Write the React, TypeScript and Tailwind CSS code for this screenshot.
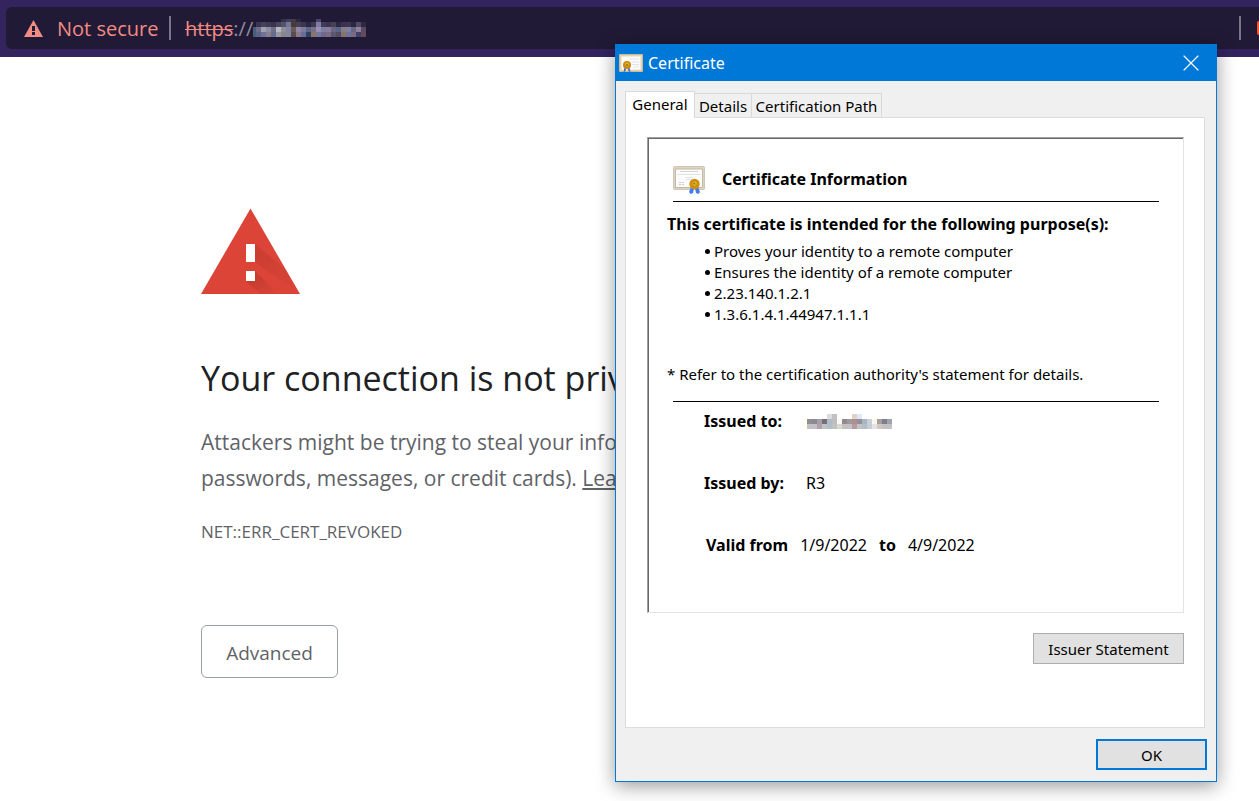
import { X } from 'lucide-react'

const CELL = 5

const hostRows = [
  ['', '', '', '', '', '', '#35334c', '#3f3f5c', '#453a40', '#2c2840', '', '', '', '#48446a', '', '', '', '', '', '', '', '', ''],
  ['', '#3a3650', '#454158', '#3f3b52', '#383450', '#4a465c', '#565268', '#72789a', '#483a38', '#454058', '#3a3650', '#2b2742', '#3c3852', '#8478a6', '#3f3b58', '#3a3650', '#454158', '#2c2842', '#38344e', '#3a3650', '#2b2742', '#504a66', '#30283c'],
  ['#44607c', '#6d6c8c', '#a0a0ae', '#8c8ca6', '#716d86', '#b4b8c6', '#908e96', '#8284a2', '#6a5a5c', '#9088a2', '#7c7a9a', '#5a6488', '#7c7088', '#988eb6', '#7c80a0', '#867c9c', '#6a6680', '#5a6488', '#8c7c80', '#7a80a6', '#6a6680', '#8c80a0', '#5c4a64'],
  ['#44607c', '#5e6288', '#6e7298', '#8a7e8a', '#686c92', '#9a98a4', '#8a8688', '#8088a0', '#5c4c50', '#8a7a88', '#6a6e94', '#304066', '#8c7468', '#727a9c', '#70688c', '#7c6a80', '#5c566e', '#524c64', '#86746c', '#6c7298', '#7a6c80', '#404070', '#644a58'],
]

const issuedToRows = [
  ['', '', '', '', '', '#dadde0', '#c2c2c4', '', '', '', '#e4d2c8', '#dbe9f8', '', '', '', '', '', ''],
  ['#fffff0', '#948c90', '#8c8a90', '#a2a0aa', '#786e78', '#b0bcc4', '#bebec0', '#f8f8f4', '#948888', '#9c9a9e', '#b08e8c', '#948f98', '#aab4c0', '#c8d0da', '#fbf6ea', '#a4a09c', '#7c7e8e', '#a0a2ae'],
  ['#fffff4', '#c2c2c4', '#c2c2c4', '#b0a2a8', '#c2c2c4', '#b2bec6', '#c2c2c4', '#d8dacc', '#c2c2c4', '#c2c2c4', '#b49c9c', '#c2c2c4', '#b2bec8', '#c8ced8', '#e2e4e8', '#d4c8bc', '#c2c2c4', '#c2c2c4'],
]

const purposes = [
  'Proves your identity to a remote computer',
  'Ensures the identity of a remote computer',
  '2.23.140.1.2.1',
  '1.3.6.1.4.1.44947.1.1.1',
]

// cropX and cropY trim the outer cells on the left and the top
function Mosaic({ rows, label, cropX = 0, cropY = 0 }: { rows: string[][]; label: string; cropX?: number; cropY?: number }) {
  const width = rows[0].length * CELL - cropX
  const height = rows.length * CELL - cropY
  return (
    <svg
      width={width}
      height={height}
      viewBox={`${cropX} ${cropY} ${width} ${height}`}
      role="img"
      aria-label={label}
      shapeRendering="crispEdges"
    >
      {rows.map((row, y) =>
        row.map((fill, x) =>
          fill ? (
            <rect key={`${x}-${y}`} x={x * CELL} y={y * CELL} width={CELL} height={CELL} fill={fill} />
          ) : null
        )
      )}
    </svg>
  )
}

function WarningTriangle() {
  return (
    <svg width="99" height="86" viewBox="0 0 99 86" aria-hidden="true">
      <defs>
        <linearGradient id="shade" x1="0" y1="0" x2="1" y2="1">
          <stop offset="0" stopColor="#b5362c" />
          <stop offset="1" stopColor="#db4437" />
        </linearGradient>
      </defs>
      <path d="M49.5 .5 99 86H0z" fill="#db4437" />
      <path d="M54 36 84 61 97 83 88 78 54 54z" fill="url(#shade)" opacity=".5" />
      <path d="M54 63 77 86H60L45 73h9z" fill="url(#shade)" opacity=".8" />
      <path d="M45 36h9v18h-9zM45 63h9v10h-9z" fill="#fff" />
    </svg>
  )
}

function CertificateSmall() {
  return (
    <svg width="24" height="19" viewBox="0 0 24 19" aria-hidden="true">
      <path d="M.5 .5h23v17H.5z" fill="#e3d3b4" stroke="#cdb993" />
      <path d="M2.5 2.5h19v13h-19z" fill="#fcfcfc" />
      <path d="M11 5h9M13 8h7M13 10.5h7M14 13h6" stroke="#dfe3e6" />
      <path d="m5.5 13-1 5.5 2-1.5.8-3zm5 0 1 5.5-2-1.5-.8-3z" fill="#2f74e0" />
      <circle cx="8" cy="11" r="4" fill="#c98a0c" />
      <circle cx="8" cy="10.5" r="2" fill="#e9b325" />
      <circle cx="8" cy="11" r=".9" fill="#8e6208" />
    </svg>
  )
}

function CertificateLarge() {
  return (
    <svg width="32" height="29" viewBox="0 0 32 29" aria-hidden="true">
      <rect x=".5" y=".5" width="31" height="23" rx="1" fill="#ddd3c3" stroke="#cfc6b7" />
      <path d="M2.5 3h27v18.5h-27z" fill="#fbfbf9" stroke="#c2b8a6" />
      <path d="M7 5.5h18" stroke="#d3d8df" />
      <path d="M4.5 8.5h23M12 11.5h8M13 13.5h6" stroke="#e0e3e9" />
      <path d="M6 16.5h6M6 18.5h5" stroke="#c5cbd5" strokeDasharray="2 1" />
      <path d="m18 21-2 5 1.5 2 2.5-1 1-5zm7 0 2 5-1.5 2-2.5-1-1-5z" fill="#3f7df0" />
      <circle cx="21.5" cy="18" r="5.2" fill="#cf8f0b" />
      <circle cx="21.5" cy="17.5" r="3" fill="#e5ab20" stroke="#b88210" strokeWidth=".8" />
      <circle cx="21" cy="17.5" r="1" fill="#a87508" />
    </svg>
  )
}

function AddressBar() {
  return (
    <header className="h-[57px] overflow-hidden bg-[#33245e] pt-[7px] pl-1.5">
      <div className="flex h-[42px] items-center rounded-l-md bg-[#201a36] pl-[18px] text-[20px]">
        <svg width="19" height="17" viewBox="0 0 19 17" aria-hidden="true">
          <path d="M9.5 0 19 17H0z" fill="#f28b82" />
          <path d="M8 6h3v5H8zM8 12h3v3H8z" fill="#201a36" />
        </svg>
        <span className="ml-3.5 w-[112px] pt-0.5 text-[#f28b82]">Not secure</span>
        <span className="h-6 w-0.5 bg-[#7a7687]" />
        <span className="ml-3.5 pt-0.5 text-[#8f8c9b]">
          <span className="text-[#f28b82] line-through decoration-1">https</span>://
        </span>
        <Mosaic rows={hostRows} label="host name" cropX={2} cropY={2} />
        <span className="mr-4 ml-auto h-6 w-0.5 bg-[#7a7687]" />
        <span className="h-3.5 w-0.5 rounded-l-sm bg-[#fb542b]" />
      </div>
    </header>
  )
}

function CertificateDialog() {
  return (
    <section
      role="dialog"
      aria-label="Certificate"
      className="absolute top-11 right-[42px] w-[602px] border border-[#0078d7] bg-[#f0f0f0] font-['Noto_Sans',sans-serif] text-[15px] leading-[21px] text-black shadow-[0_4px_18px_rgba(0,0,0,0.4)]"
    >
      <div className="flex h-9 items-center bg-[#0078d7] pr-[15px] pl-[3px] text-white">
        <CertificateSmall />
        <h2 className="ml-[5px] flex-1 text-[16px]">Certificate</h2>
        <button type="button" aria-label="Close">
          <X strokeWidth={1} className="-m-1 size-7" />
        </button>
      </div>

      <div className="px-[9px] pt-2.5 pb-[11px]">
        <div role="tablist" className="flex items-end">
          <button type="button" role="tab" aria-selected="true" className="z-10 -mb-px h-[27px] w-[70px] border border-b-0 border-[#d9d9d9] bg-white pb-0.5">
            General
          </button>
          <button type="button" role="tab" aria-selected="false" className="h-6 w-[57px] border-t border-r border-[#d9d9d9] pt-px">
            Details
          </button>
          <button type="button" role="tab" aria-selected="false" className="h-6 w-[130px] border-t border-r border-[#d9d9d9] pt-px whitespace-nowrap">
            Certification Path
          </button>
        </div>

        <div role="tabpanel" className="mr-0.5 border border-[#dcdcdc] bg-white px-5 pt-[19px] pb-[63px]">
          <div className="ml-px border border-t-[#a0a0a0] border-r-[#e3e3e3] border-b-[#e3e3e3] border-l-[#a0a0a0]">
            <div className="border-t border-l border-[#696969] pt-[27px] pr-6 pb-[56px] pl-[18px]">
              <div className="ml-1.5 flex h-[36px] gap-[17px] border-b border-black">
                <CertificateLarge />
                <h3 className="pt-[3px] text-[16px] font-bold">Certificate Information</h3>
              </div>

              <h4 className="mt-3 text-[16px] font-bold">This certificate is intended for the following purpose(s):</h4>
              <ul className="mt-1.5 ml-[38px]">
                {purposes.map(p => (
                  <li key={p} className="flex items-center gap-1">
                    <span className="size-[5px] rounded-full bg-black" />
                    {p}
                  </li>
                ))}
              </ul>
              <p className="mt-[39px]">* Refer to the certification authority's statement for details.</p>

              <dl className="mt-4 ml-1.5 border-t border-black pt-[9px] pl-[31px] text-[16px]">
                <div className="flex items-center">
                  <dt className="w-[98px] font-bold">Issued to:</dt>
                  <dd>
                    <Mosaic rows={issuedToRows} label="issued to" />
                  </dd>
                </div>
                <div className="mt-[41px] flex">
                  <dt className="w-[102px] font-bold">Issued by:</dt>
                  <dd>R3</dd>
                </div>
                <div className="mt-[41px] flex gap-3 pl-0.5">
                  <dt className="font-bold">Valid from</dt>
                  <dd>1/9/2022</dd>
                  <dt className="font-bold">to</dt>
                  <dd>4/9/2022</dd>
                </div>
              </dl>
            </div>
          </div>
          <div className="mt-5 flex justify-end">
            <button type="button" className="h-[31px] w-[151px] border border-[#adadad] bg-[#e1e1e1] pt-px">
              Issuer Statement
            </button>
          </div>
        </div>

        <div className="mt-[11px] flex justify-end">
          <button type="button" className="h-[31px] w-[111px] border-2 border-[#0078d7] bg-[#e1e1e1] pt-px">
            OK
          </button>
        </div>
      </div>
    </section>
  )
}

export default function App() {
  return (
    <div className="relative min-h-screen overflow-hidden bg-white font-['Open_Sans',sans-serif]">
      <AddressBar />
      <main className="px-[201px] pt-[151px] text-[21px] leading-9 text-[#5f6368]">
        <WarningTriangle />
        <h1 className="mt-[60px] text-[34px] leading-[48px] text-[#202124]">Your connection is not private</h1>
        <p className="mt-[22px]">
          Attackers might be trying to steal your information (for example,
          <br />
          passwords, messages, or credit cards).{' '}
          <a href="#" className="text-[#5f6368] underline underline-offset-2">
            Learn more
          </a>
        </p>
        <p className="mt-[18px] text-[17px]">NET::ERR_CERT_REVOKED</p>
        <button type="button" className="mt-[75px] h-[53px] w-[137px] rounded-md border border-[#9aa0a6] pt-0.5 text-[19px]">
          Advanced
        </button>
      </main>
      <CertificateDialog />
    </div>
  )
}
